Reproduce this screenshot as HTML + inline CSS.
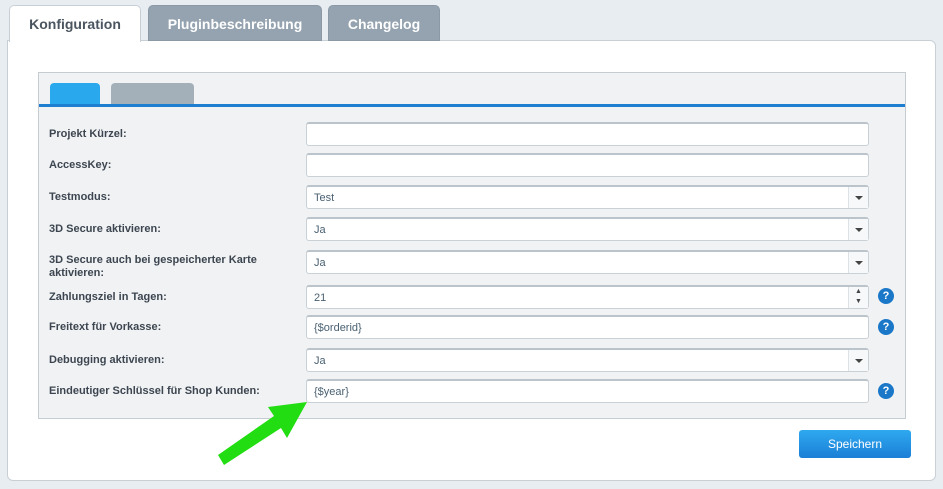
<!DOCTYPE html>
<html><head><style>
*{margin:0;padding:0;box-sizing:border-box}
body{width:943px;height:489px;background:#e8edf2;font-family:"Liberation Sans",sans-serif;position:relative;overflow:hidden}
.a{position:absolute}
.tab{position:absolute;top:5px;height:36px;border-radius:5px 5px 0 0;font-size:14px;font-weight:bold;text-align:center;line-height:36px;color:#fff;background:#94a3af;border:1px solid #8a99a5}
.lbl{position:absolute;left:49px;font-size:11px;font-weight:bold;color:#3d4650;line-height:13px}
.inp{position:absolute;left:306px;width:563px;height:24px;background:#fff;border:1px solid #c9d0d6;border-top:2px solid #bcc4cb;border-radius:3px;font-size:11px;color:#4a6172;padding-left:7px;line-height:22px}
.dd{position:absolute;right:0;top:0;width:20px;height:100%;border-left:1px solid #dde2e6;background:#f7f8f9}
.dd:after{content:"";position:absolute;left:6px;top:9px;border-left:4px solid transparent;border-right:4px solid transparent;border-top:4px solid #444}
.q{position:absolute;left:878px;width:16px;height:16px;border-radius:50%;background:#1b78c8;color:#fff;font-size:11px;font-weight:bold;text-align:center;line-height:16px}
</style></head><body>
<div class="a" style="left:7px;top:40px;width:929px;height:441px;background:#fff;border:1px solid #c8d0d6;border-radius:0 6px 6px 6px"></div>
<div class="tab" style="left:9px;width:132px;background:#fff;color:#4a5560;border-color:#c8d0d6;border-bottom:none;height:37px">Konfiguration</div>
<div class="tab" style="left:148px;width:174px">Pluginbeschreibung</div>
<div class="tab" style="left:328px;width:112px">Changelog</div>

<div class="a" style="left:38px;top:72px;width:868px;height:347px;background:#f0f2f4;border:1px solid #c5cdd3"></div>
<div class="a" style="left:50px;top:83px;width:50px;height:22px;background:#29a8ee;border-radius:4px 4px 0 0"></div>
<div class="a" style="left:111px;top:83px;width:83px;height:22px;background:#a3b0ba;border-radius:4px 4px 0 0"></div>
<div class="a" style="left:39px;top:104px;width:866px;height:3px;background:#1e7fd0"></div>

<div class="lbl" style="top:128px">Projekt Kürzel:</div>
<div class="inp" style="top:122px"></div>
<div class="lbl" style="top:159px">AccessKey:</div>
<div class="inp" style="top:153px"></div>
<div class="lbl" style="top:191px">Testmodus:</div>
<div class="inp" style="top:185px">Test<div class="dd"></div></div>
<div class="lbl" style="top:223px">3D Secure aktivieren:</div>
<div class="inp" style="top:217px">Ja<div class="dd"></div></div>
<div class="lbl" style="top:254px">3D Secure auch bei gespeicherter Karte<br>aktivieren:</div>
<div class="inp" style="top:250px">Ja<div class="dd"></div></div>
<div class="lbl" style="top:291px">Zahlungsziel in Tagen:</div>
<div class="inp" style="top:285px">21<div class="a" style="right:0;top:0;width:20px;height:100%;border-left:1px solid #dde2e6;background:#f7f8f9;font-size:7px;line-height:10px;text-align:center;color:#444">▲<br>▼</div></div>
<div class="q" style="top:288px">?</div>
<div class="lbl" style="top:321px">Freitext für Vorkasse:</div>
<div class="inp" style="top:315px">{$orderid}</div>
<div class="q" style="top:319px">?</div>
<div class="lbl" style="top:354px">Debugging aktivieren:</div>
<div class="inp" style="top:348px">Ja<div class="dd"></div></div>
<div class="lbl" style="top:385px">Eindeutiger Schlüssel für Shop Kunden:</div>
<div class="inp" style="top:379px">{$year}</div>
<div class="q" style="top:383px">?</div>

<div class="a" style="left:799px;top:430px;width:112px;height:28px;border-radius:3px;background:linear-gradient(#2fa9f0,#1b7fd6);color:#fff;font-size:12px;text-align:center;line-height:28px">Speichern</div>

<svg class="a" style="left:0;top:0" width="943" height="489">
<path d="M218 455 L274 416 L268 407 L307 402 L287 438 L281 428 L224 465 Z" fill="#22dd11"/>
</svg>
</body></html>
